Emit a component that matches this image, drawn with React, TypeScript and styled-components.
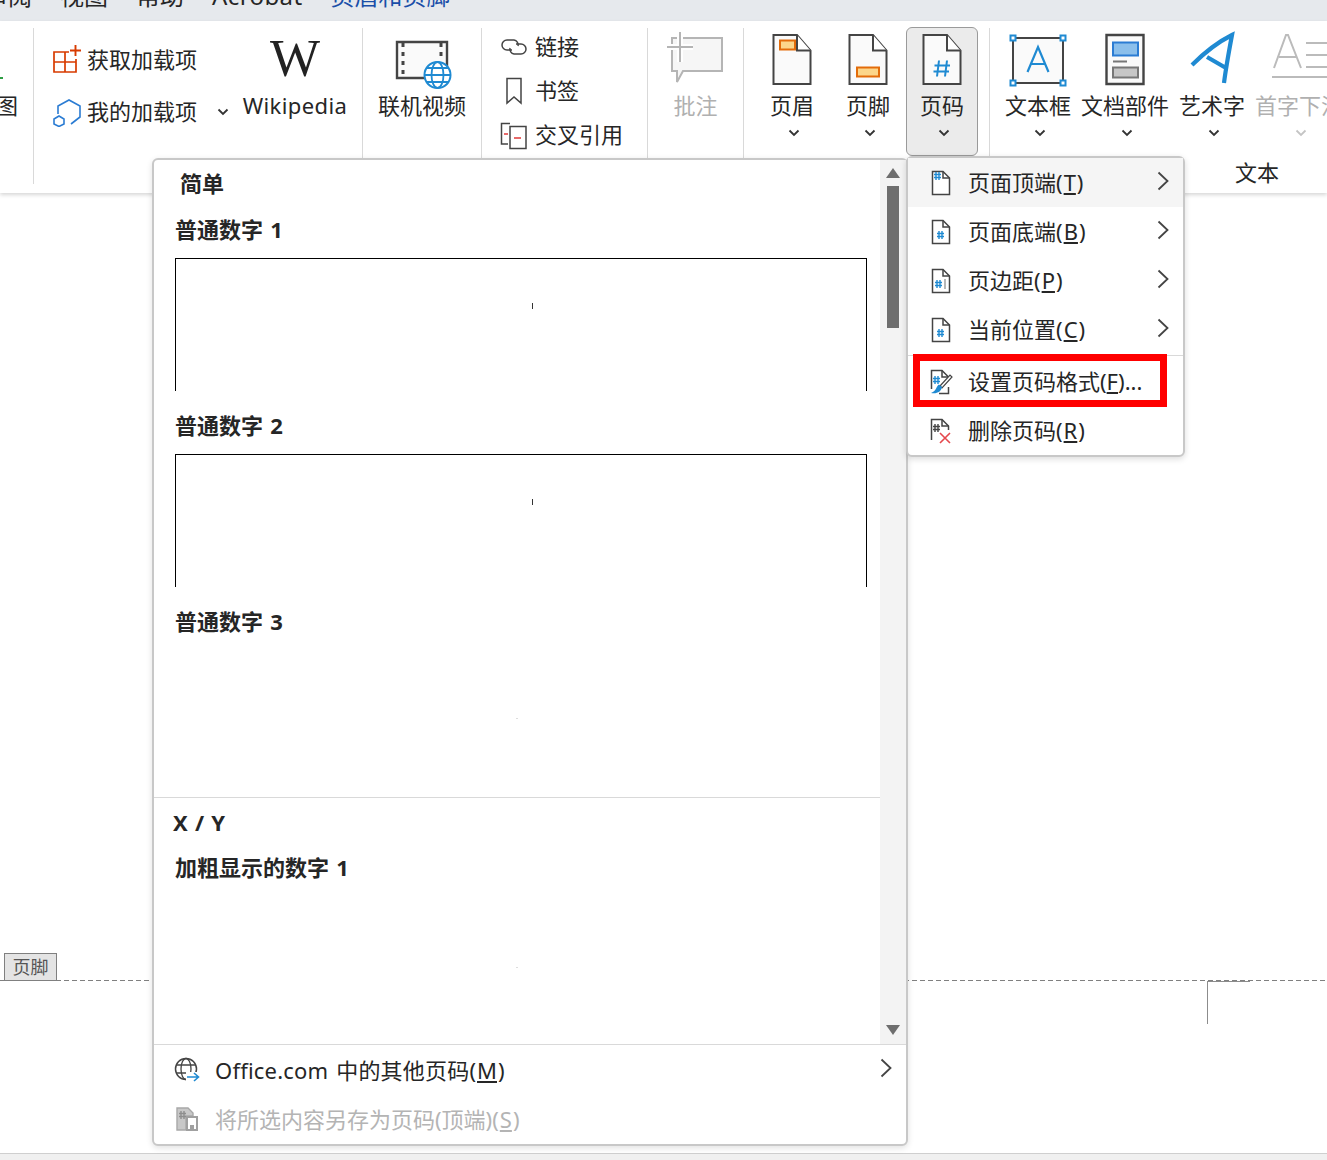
import React from "react";
import styled, { createGlobalStyle } from "styled-components";

const GlobalStyle = createGlobalStyle`
  html, body {
    margin: 0;
    padding: 0;
    background: #fff;
    overflow: hidden;
  }
  body {
    font-family: "Noto Sans", "Noto Sans CJK SC", sans-serif;
    color: #262626;
  }
`;

const DARK = "#444";
const PAPER = "#fafafa";
const BLUE = "#1f8ad2";
const ORANGE = "#e36c0a";

function PageShape({ children }: { children?: React.ReactNode }) {
  return (
    <svg width="40" height="56" viewBox="0 -2.5 40 56">
      <path d="M1.5 1.5H25L38.5 17V50.5H1.5Z" fill={PAPER} stroke={DARK} strokeWidth="2" />
      <path d="M25 1.5V17H38.5" fill="#fff" stroke={DARK} strokeWidth="2" />
      {children}
    </svg>
  );
}

function SmallPage({ children, top }: { children?: React.ReactNode; top?: boolean }) {
  return (
    <svg width="22" height="26" viewBox="0 0 22 26">
      <path d="M2.5 1.5H13L19.5 8V24.5H2.5Z" fill="#fff" stroke={DARK} strokeWidth="1.5" />
      <path d="M13 1.5V8H19.5" fill="none" stroke={DARK} strokeWidth="1.5" />
      {top ? <Hash x={4} y={2} /> : children}
    </svg>
  );
}

function Hash({ x, y, color = BLUE }: { x: number; y: number; color?: string }) {
  return (
    <path
      d={`M${x + 2} ${y}V${y + 8}M${x + 5} ${y}V${y + 8}M${x} ${y + 2.5}H${x + 7}M${x} ${y + 5.5}H${x + 7}`}
      stroke={color}
      strokeWidth="1.4"
      fill="none"
    />
  );
}

function Chevron({ color = "#333" }: { color?: string }) {
  return (
    <svg width="12" height="8" viewBox="0 0 12 8">
      <path d="M1.5 1.5L6 6L10.5 1.5" fill="none" stroke={color} strokeWidth="1.8" />
    </svg>
  );
}

function ArrowRight() {
  return (
    <svg width="12" height="20" viewBox="0 0 12 20">
      <path d="M1.5 1.5L10.5 10L1.5 18.5" fill="none" stroke="#444" strokeWidth="1.8" />
    </svg>
  );
}

const GetAddinIcon = () => (
  <svg width="30" height="30" viewBox="0 0 30 30">
    <path d="M18 7H3V27H25V14M3 17H25M14 7V27" fill="none" stroke="#d83b01" strokeWidth="1.7" />
    <path d="M24.5 0V11M19 5.5H30" stroke="#d83b01" strokeWidth="1.9" />
  </svg>
);

const MyAddinIcon = () => (
  <svg width="30" height="30" viewBox="0 0 30 30">
    <path d="M7 17V9L18 3L29 9V20L20 27" fill="none" stroke="#2b7cd3" strokeWidth="1.6" />
    <path d="M8 19L13 22V27L8 29.5L3 27V22Z" fill="#fff" stroke="#2b7cd3" strokeWidth="1.6" />
  </svg>
);

const VideoIcon = () => (
  <svg width="62" height="60" viewBox="0 0 62 60">
    <path d="M6 11H56V47H6Z" fill={PAPER} stroke={DARK} strokeWidth="2.4" />
    <path d="M12 12V46M50 12V28" stroke={DARK} strokeWidth="3" strokeDasharray="4 5" />
    <circle cx="46.5" cy="44" r="13" fill="#fff" stroke={BLUE} strokeWidth="2" />
    <ellipse cx="46.5" cy="44" rx="6" ry="13" fill="none" stroke={BLUE} strokeWidth="1.8" />
    <path d="M33.5 44H59.5M35.5 37H57.5M35.5 51H57.5" stroke={BLUE} strokeWidth="1.8" />
  </svg>
);

const LinkIcon = () => (
  <svg width="28" height="18" viewBox="0 0 28 18">
    <path d="M12 12H7A5 5 0 0 1 7 2H14A5 5 0 0 1 18 8" fill="none" stroke={DARK} strokeWidth="1.5" />
    <path d="M16 6H21A5 5 0 0 1 21 16H14A5 5 0 0 1 10 10" fill="none" stroke={DARK} strokeWidth="1.5" />
  </svg>
);

const BookmarkIcon = () => (
  <svg width="18" height="28" viewBox="0 0 18 28">
    <path d="M2 1.5H16V26L9 20L2 26Z" fill="#fff" stroke={DARK} strokeWidth="1.5" />
  </svg>
);

const CrossRefIcon = () => (
  <svg width="28" height="30" viewBox="0 0 28 30">
    <path d="M10 3.5H1.5V24H8" fill="none" stroke={DARK} strokeWidth="1.5" />
    <path d="M10 6.5H26V28.5H10Z" fill="#fff" stroke={DARK} strokeWidth="1.5" />
    <path d="M4 14H8M14 18H21" stroke="#e03a3a" strokeWidth="1.6" />
  </svg>
);

const CommentIcon = () => (
  <svg width="58" height="54" viewBox="0 0 58 54">
    <path d="M5 7H55V40H16L10 51V40H5Z" fill="#f6f6f6" stroke="#b5b5b5" strokeWidth="2" />
    <path d="M13 1V31M0 16H26" stroke="#fff" strokeWidth="6" />
    <path d="M13 1V31M0 16H26" stroke="#b5b5b5" strokeWidth="2" />
  </svg>
);

const TextBoxIcon = () => (
  <svg width="58" height="56" viewBox="0 0 58 56">
    <path d="M4 7H54V52H4Z" fill={PAPER} stroke={DARK} strokeWidth="2" />
    <path d="M18.5 41L29 16L39.5 41M22.5 33H35.5" fill="none" stroke={BLUE} strokeWidth="2.2" />
    <path d="M1.5 4.5h5v5h-5zM51.5 4.5h5v5h-5zM1.5 49.5h5v5h-5zM51.5 49.5h5v5h-5z" fill="#fff" stroke={BLUE} strokeWidth="2" />
  </svg>
);

const PartsIcon = () => (
  <svg width="40" height="56" viewBox="0 -2.5 40 56">
    <path d="M1.5 1.5H38.5V50.5H1.5Z" fill={PAPER} stroke={DARK} strokeWidth="2.4" />
    <path d="M8 9H33V22H8Z" fill="#8bbfeb" stroke="#2b7cd3" strokeWidth="2" />
    <path d="M8 28H22" stroke="#777" strokeWidth="2" />
    <path d="M8 34H33V44H8Z" fill="#c6c6c6" stroke="#777" strokeWidth="2" />
  </svg>
);

const WordArtIcon = () => (
  <svg width="46" height="56" viewBox="0 0 46 56">
    <path d="M3 34C16 21 29 11 43 4C40 20 37 36 35 52M18 26L37 37" fill="none" stroke={BLUE} strokeWidth="4.2" />
  </svg>
);

const DropCapIcon = () => (
  <svg width="88" height="56" viewBox="0 0 88 56">
    <path d="M19 37L31 4H33L46 37M24 26H41M17 46H88" fill="none" stroke="#bbb" strokeWidth="2" />
    <path d="M51 12H88M51 24H88M51 36H88" stroke="#bbb" strokeWidth="2" />
  </svg>
);

const GlobeArrowIcon = () => (
  <svg width="26" height="26" viewBox="0 0 26 26">
    <circle cx="12" cy="12" r="10.5" fill="none" stroke={DARK} strokeWidth="1.5" />
    <ellipse cx="12" cy="12" rx="5" ry="10.5" fill="none" stroke={DARK} strokeWidth="1.3" />
    <path d="M2 8H22M2 16H13" stroke={DARK} strokeWidth="1.3" />
    <rect x="12" y="15" width="14" height="10" fill="#fff" />
    <path d="M13 20H24M20 16L24.5 20L20 24" fill="none" stroke={BLUE} strokeWidth="1.6" />
  </svg>
);

const SaveGalleryIcon = () => (
  <svg width="24" height="26" viewBox="0 0 24 26">
    <path d="M2 2H13L18 7V10H11V24H2Z" fill="#c8c8c8" stroke="#a8a8a8" strokeWidth="1.4" />
    <path d="M12 11H22V24H12Z" fill="#fff" stroke="#a0a0a0" strokeWidth="2" />
    <path d="M15 19H19V24H15Z" fill="#a0a0a0" />
    <Hash x={4} y={5} color="#8e8e8e" />
  </svg>
);

const FormatIcon = () => (
  <svg width="24" height="26" viewBox="0 0 24 26">
    <path d="M2.5 20V1.5H13L19.5 8V11M19.5 18V24.5H10" fill="none" stroke={DARK} strokeWidth="1.5" />
    <path d="M13 1.5V8H19.5" fill="none" stroke={DARK} strokeWidth="1.5" />
    <Hash x={4} y={7} />
    <path d="M11 17L21 6L23 8L13 19Z" fill="#fff" stroke={DARK} strokeWidth="1.2" />
    <path d="M2 24C8 25 12 23 13 18L10 15.5C7 17 8 22 2 24Z" fill={BLUE} />
  </svg>
);

const DeleteIcon = () => (
  <svg width="24" height="26" viewBox="0 0 24 26">
    <path d="M2.5 22V1.5H13L19.5 8V12" fill="none" stroke={DARK} strokeWidth="1.5" />
    <path d="M13 1.5V8H19.5" fill="none" stroke={DARK} strokeWidth="1.5" />
    <Hash x={4} y={6} color={DARK} />
    <path d="M11 15L21 25M21 15L11 25" stroke="#e5484d" strokeWidth="1.6" />
  </svg>
);

const Page = styled.div`
  position: relative;
  width: 1327px;
  height: 1160px;
  display: flex;
  flex-direction: column;
  overflow: hidden;
`;

const TabBar = styled.div`
  height: 21px;
  flex: none;
  background: #e6e9ed;
  overflow: hidden;
  display: flex;
  gap: 28px;
`;

const Tab = styled.span<{ $active?: boolean; $latin?: boolean }>`
  font-size: 24px;
  line-height: 24px;
  margin-top: -16px;
  white-space: nowrap;
  letter-spacing: ${(p) => (p.$latin ? "0.4px" : "0")};
  color: ${(p) => (p.$active ? "#1a4ea8" : "#262626")};
  &:first-child {
    margin-left: -16px;
  }
`;

const Ribbon = styled.div`
  position: relative;
  height: 172px;
  flex: none;
  display: flex;
  align-items: flex-start;
  padding-top: 7px;
  box-sizing: border-box;
  background: #fff;
  box-shadow: 0 2px 4px rgba(0, 0, 0, 0.16);
  z-index: 1;
`;

const Group = styled.div<{ $w: number; $pad?: number }>`
  position: relative;
  width: ${(p) => p.$w}px;
  flex: none;
  height: 156px;
  box-sizing: border-box;
  padding-left: ${(p) => p.$pad ?? 0}px;
  border-right: 1px solid #d9d9d9;
  display: flex;
`;

const LastGroup = styled(Group)`
  border-right: none;
  flex-direction: column;
`;

const GroupRow = styled.div<{ $gap?: number }>`
  display: flex;
  gap: ${(p) => p.$gap ?? 0}px;
`;

const GroupLabel = styled.div`
  font-size: 22px;
  line-height: 32px;
  text-align: center;
`;

const ClippedText = styled.div`
  font-size: 22px;
  line-height: 32px;
  margin: 61px 0 0 -4px;
`;

const GreenTick = styled.i`
  position: absolute;
  left: 0;
  top: 49px;
  width: 3px;
  height: 2px;
  background: #2e9e44;
`;

const TallButton = styled.div<{ $w?: number; $pressed?: boolean; $off?: boolean }>`
  width: ${(p) => (p.$w ? `${p.$w}px` : "auto")};
  height: 129px;
  margin-top: -1px;
  flex: none;
  box-sizing: border-box;
  padding-top: 3px;
  display: flex;
  flex-direction: column;
  align-items: center;
  border: 1px solid ${(p) => (p.$pressed ? "#9a9a9a" : "transparent")};
  border-radius: 6px;
  background: ${(p) => (p.$pressed ? "#ebebeb" : "transparent")};
  color: ${(p) => (p.$off ? "#b0b0b0" : "#262626")};
`;

const WikiButton = styled(TallButton)`
  margin-left: 7px;
`;

const TallIcon = styled.div`
  height: 58px;
  display: flex;
  align-items: flex-start;
  justify-content: center;
`;

const TallText = styled.div<{ $latin?: boolean }>`
  font-size: 22px;
  line-height: 32px;
  white-space: nowrap;
  letter-spacing: ${(p) => (p.$latin ? "0.4px" : "0")};
`;

const TallChevron = styled.div`
  height: 23px;
  display: flex;
  align-items: center;
  justify-content: center;
  padding-left: 3px;
`;

const SmallColumn = styled.div<{ $row: number; $top: number }>`
  display: flex;
  flex-direction: column;
  margin-top: ${(p) => p.$top}px;
  & > div {
    height: ${(p) => p.$row}px;
  }
`;

const SmallRow = styled.div`
  display: flex;
  align-items: center;
  gap: 6px;
  font-size: 22px;
  white-space: nowrap;
`;

const SmallIcon = styled.span`
  width: 30px;
  display: flex;
  align-items: center;
  justify-content: center;
`;

const Caption = styled.span<{ $lift?: number }>`
  margin-bottom: ${(p) => p.$lift ?? 4}px;
`;

const RowChevron = styled.span`
  display: flex;
  margin-left: 14px;
`;

const WikiLogo = styled.div`
  font-family: "Liberation Serif", serif;
  font-size: 53px;
  line-height: 53px;
  color: #222;
  margin-top: 1px;
`;

const DocArea = styled.div`
  flex: 1;
  padding-top: 760px;
  background: #fff;
`;

const FooterLine = styled.div`
  height: 28px;
  padding-left: 4px;
  background: linear-gradient(90deg, #808080 5px, transparent 5px) left bottom / 8px 1px repeat-x;
`;

const FooterTag = styled.div`
  width: 53px;
  height: 28px;
  box-sizing: border-box;
  background: #e4e4e4;
  border: 1px solid #808080;
  color: #555;
  font-size: 18px;
  line-height: 26px;
  text-align: center;
`;

const FooterFrame = styled.div`
  width: 43px;
  height: 43px;
  margin-left: 1207px;
  box-sizing: border-box;
  border-left: 1px solid #8c8c8c;
  border-top: 1px solid #8c8c8c;
`;

const StatusStrip = styled.div`
  height: 6px;
  flex: none;
  background: #f0f0f0;
  border-top: 1px solid #cfcfcf;
`;

const Gallery = styled.div`
  position: absolute;
  left: 152px;
  top: 158px;
  width: 756px;
  height: 988px;
  box-sizing: border-box;
  background: #fff;
  border: 2px solid #c8c8c8;
  border-radius: 6px;
  box-shadow: 0 2px 6px rgba(0, 0, 0, 0.12);
  display: flex;
  flex-direction: column;
  z-index: 2;
`;

const GalleryBody = styled.div`
  flex: none;
  height: 885px;
  box-sizing: border-box;
  display: flex;
  border-bottom: 1px solid #d9d9d9;
`;

const GalleryScroll = styled.div`
  flex: 1;
  overflow: hidden;
`;

const SectionHead = styled.div<{ $indent: number; $line?: boolean }>`
  height: 47px;
  padding-left: ${(p) => p.$indent}px;
  font-size: 22px;
  font-weight: 700;
  word-spacing: 1.5px;
  line-height: ${(p) => (p.$line ? 49 : 47)}px;
  border-top: ${(p) => (p.$line ? "1px solid #d9d9d9" : "none")};
`;

const Entry = styled.div<{ $h: number }>`
  height: ${(p) => p.$h}px;
  padding-left: 21px;
`;

const EntryName = styled.div`
  height: 46px;
  font-size: 22px;
  font-weight: 700;
  word-spacing: 1.5px;
  line-height: 44px;
`;

const Preview = styled.div`
  position: relative;
  width: 692px;
  height: 133px;
  margin-top: 5px;
  box-sizing: border-box;
  border: 1px solid #000;
  border-bottom: none;
`;

const PreviewTick = styled.i`
  position: absolute;
  left: 356px;
  top: 44px;
  width: 1px;
  height: 6px;
  background: #333;
`;

const BlankPreview = styled.div`
  position: relative;
  height: 132px;
  margin-top: 5px;
`;

const BlankDot = styled.i<{ $top: number }>`
  position: absolute;
  left: 341px;
  top: ${(p) => p.$top}px;
  width: 2px;
  height: 1px;
  background: #ddd;
`;

const ScrollBar = styled.div`
  width: 26px;
  flex: none;
  background: #f3f3f3;
  display: flex;
  flex-direction: column;
  align-items: center;
  padding: 8px 0 9px;
  box-sizing: border-box;
`;

const ScrollThumb = styled.div`
  width: 12px;
  height: 142px;
  margin-top: 8px;
  background: #6e6e6e;
`;

const ArrowUp = styled.div`
  width: 0;
  height: 0;
  border-left: 7px solid transparent;
  border-right: 7px solid transparent;
  border-bottom: 10px solid #6e6e6e;
`;

const ArrowDown = styled.div`
  width: 0;
  height: 0;
  margin-top: auto;
  border-left: 7px solid transparent;
  border-right: 7px solid transparent;
  border-top: 10px solid #6e6e6e;
`;

const GalleryRow = styled.div<{ $off?: boolean }>`
  height: 49px;
  flex: none;
  display: flex;
  align-items: center;
  padding: 0 14px 0 20px;
  gap: 15px;
  font-size: 22px;
  white-space: nowrap;
  color: ${(p) => (p.$off ? "#b4b4b4" : "#262626")};
`;

const RowIcon = styled.span`
  width: 26px;
  display: flex;
  justify-content: center;
`;

const RowArrow = styled.span`
  display: flex;
  margin-left: auto;
  margin-bottom: 4px;
`;

const LatinWide = styled.span`
  letter-spacing: 0.2px;
  word-spacing: 2px;
`;

const Key = styled.u`
  padding: 0 1px;
`;

const Menu = styled.div`
  position: absolute;
  left: 906px;
  top: 156px;
  width: 279px;
  height: 301px;
  box-sizing: border-box;
  background: #fff;
  border: 2px solid #c8c8c8;
  border-radius: 6px;
  box-shadow: 0 2px 6px rgba(0, 0, 0, 0.14);
  z-index: 3;
`;

const MenuItem = styled.div<{ $hot?: boolean }>`
  height: 49px;
  display: flex;
  align-items: center;
  padding: 0 14px 0 21px;
  font-size: 22px;
  white-space: nowrap;
  background: ${(p) => (p.$hot ? "#f5f5f5" : "transparent")};
`;

const MenuIcon = styled.span`
  width: 24px;
  display: flex;
  justify-content: center;
  margin-right: 15px;
`;

const MenuDivider = styled.div`
  height: 3px;
  padding-top: 1px;
  box-sizing: border-box;
  &::after {
    content: "";
    display: block;
    height: 1px;
    background: #d9d9d9;
  }
`;

const Highlight = styled.div`
  position: absolute;
  left: 5px;
  top: 196px;
  width: 254px;
  height: 53px;
  box-sizing: border-box;
  border: 7px solid #ff0000;
`;

const ribbonPages = [
  {
    label: "页眉",
    w: 76,
    art: <path d="M8 7H23V16H8Z" fill="#fcd68a" stroke={ORANGE} strokeWidth="2" />,
  },
  {
    label: "页脚",
    w: 76,
    art: <path d="M9 34H31V43H9Z" fill="#fcd68a" stroke={ORANGE} strokeWidth="2" />,
  },
];

const menuItems = [
  { text: "页面顶端", key: "T", top: true },
  { text: "页面底端", key: "B", x: 7, y: 12 },
  { text: "页边距", key: "P", x: 5, y: 12, bar: true },
  { text: "当前位置", key: "C", x: 7, y: 12 },
];

export default function App() {
  return (
    <Page>
      <GlobalStyle />
      <TabBar>
        <Tab>审阅</Tab>
        <Tab>视图</Tab>
        <Tab>帮助</Tab>
        <Tab $latin>Acrobat</Tab>
        <Tab $active>页眉和页脚</Tab>
      </TabBar>

      <Ribbon>
        <Group $w={34}>
          <GreenTick />
          <ClippedText>图</ClippedText>
        </Group>
        <Group $w={329} $pad={17}>
          <SmallColumn $row={52} $top={6}>
            <SmallRow>
              <SmallIcon><GetAddinIcon /></SmallIcon>
              <Caption>获取加载项</Caption>
            </SmallRow>
            <SmallRow>
              <SmallIcon><MyAddinIcon /></SmallIcon>
              <Caption>我的加载项</Caption>
              <RowChevron><Chevron /></RowChevron>
            </SmallRow>
          </SmallColumn>
          <WikiButton $w={118}>
            <TallIcon><WikiLogo>W</WikiLogo></TallIcon>
            <TallText $latin>Wikipedia</TallText>
          </WikiButton>
        </Group>
        <Group $w={119}>
          <TallButton $w={118}>
            <TallIcon><VideoIcon /></TallIcon>
            <TallText>联机视频</TallText>
          </TallButton>
        </Group>
        <Group $w={166} $pad={17}>
          <SmallColumn $row={44} $top={-3}>
            <SmallRow>
              <SmallIcon><LinkIcon /></SmallIcon>
              <Caption>链接</Caption>
            </SmallRow>
            <SmallRow>
              <SmallIcon><BookmarkIcon /></SmallIcon>
              <Caption>书签</Caption>
            </SmallRow>
            <SmallRow>
              <SmallIcon><CrossRefIcon /></SmallIcon>
              <Caption>交叉引用</Caption>
            </SmallRow>
          </SmallColumn>
        </Group>
        <Group $w={96}>
          <TallButton $w={95} $off>
            <TallIcon><CommentIcon /></TallIcon>
            <TallText>批注</TallText>
          </TallButton>
        </Group>
        <Group $w={246} $pad={10}>
          {ribbonPages.map((item) => (
            <TallButton key={item.label} $w={item.w}>
              <TallIcon><PageShape>{item.art}</PageShape></TallIcon>
              <TallText>{item.label}</TallText>
              <TallChevron><Chevron /></TallChevron>
            </TallButton>
          ))}
          <TallButton $w={72} $pressed>
            <TallIcon>
              <PageShape>
                <path d="M17 27L15 43M25 27L23 43M12.5 32H28M11.5 38H27" stroke={BLUE} strokeWidth="2" fill="none" />
              </PageShape>
            </TallIcon>
            <TallText>页码</TallText>
            <TallChevron><Chevron /></TallChevron>
          </TallButton>
        </Group>
        <LastGroup $w={520} $pad={14}>
          <GroupRow $gap={8}>
            <TallButton>
              <TallIcon><TextBoxIcon /></TallIcon>
              <TallText>文本框</TallText>
              <TallChevron><Chevron /></TallChevron>
            </TallButton>
            <TallButton>
              <TallIcon><PartsIcon /></TallIcon>
              <TallText>文档部件</TallText>
              <TallChevron><Chevron /></TallChevron>
            </TallButton>
            <TallButton>
              <TallIcon><WordArtIcon /></TallIcon>
              <TallText>艺术字</TallText>
              <TallChevron><Chevron /></TallChevron>
            </TallButton>
            <TallButton $off>
              <TallIcon><DropCapIcon /></TallIcon>
              <TallText>首字下沉</TallText>
              <TallChevron><Chevron color="#c4c4c4" /></TallChevron>
            </TallButton>
          </GroupRow>
          <GroupLabel>文本</GroupLabel>
        </LastGroup>
      </Ribbon>

      <DocArea>
        <FooterLine>
          <FooterTag>页脚</FooterTag>
        </FooterLine>
        <FooterFrame />
      </DocArea>
      <StatusStrip />

      <Gallery>
        <GalleryBody>
          <GalleryScroll>
            <SectionHead $indent={26}>简单</SectionHead>
            <Entry $h={196}>
              <EntryName>普通数字 1</EntryName>
              <Preview><PreviewTick /></Preview>
            </Entry>
            <Entry $h={196}>
              <EntryName>普通数字 2</EntryName>
              <Preview><PreviewTick /></Preview>
            </Entry>
            <Entry $h={198}>
              <EntryName>普通数字 3</EntryName>
              <BlankPreview><BlankDot $top={68} /></BlankPreview>
            </Entry>
            <SectionHead $indent={19} $line>X / Y</SectionHead>
            <Entry $h={196}>
              <EntryName>加粗显示的数字 1</EntryName>
              <BlankPreview><BlankDot $top={71} /></BlankPreview>
            </Entry>
          </GalleryScroll>
          <ScrollBar>
            <ArrowUp />
            <ScrollThumb />
            <ArrowDown />
          </ScrollBar>
        </GalleryBody>
        <GalleryRow>
          <RowIcon><GlobeArrowIcon /></RowIcon>
          <Caption $lift={2}>
            <LatinWide>Office.com 中的其他页码</LatinWide>(<Key>M</Key>)
          </Caption>
          <RowArrow><ArrowRight /></RowArrow>
        </GalleryRow>
        <GalleryRow $off>
          <RowIcon><SaveGalleryIcon /></RowIcon>
          <Caption $lift={2}>将所选内容另存为页码(顶端)(<Key>S</Key>)</Caption>
        </GalleryRow>
      </Gallery>

      <Menu>
        {menuItems.map((item, i) => (
          <MenuItem key={item.key} $hot={i === 0}>
            <MenuIcon>
              <SmallPage top={item.top}>
                {item.x !== undefined && <Hash x={item.x} y={item.y} />}
                {item.bar && <path d="M15 11V21" stroke="#888" strokeWidth="1.2" />}
              </SmallPage>
            </MenuIcon>
            <Caption>{item.text}(<Key>{item.key}</Key>)</Caption>
            <RowArrow><ArrowRight /></RowArrow>
          </MenuItem>
        ))}
        <MenuDivider />
        <MenuItem>
          <MenuIcon><FormatIcon /></MenuIcon>
          <Caption>设置页码格式(<u>F</u>)...</Caption>
        </MenuItem>
        <MenuItem>
          <MenuIcon><DeleteIcon /></MenuIcon>
          <Caption>删除页码(<Key>R</Key>)</Caption>
        </MenuItem>
        <Highlight />
      </Menu>
    </Page>
  );
}
